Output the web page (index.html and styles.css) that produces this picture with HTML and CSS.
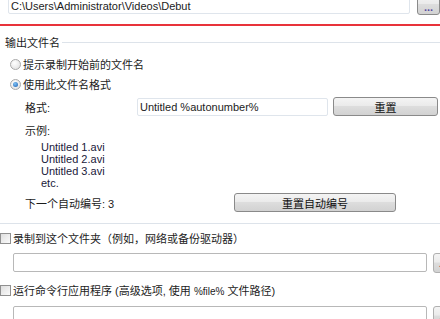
FILE: index.html
```html
<!DOCTYPE html>
<html lang="zh-CN">

<head>
  <meta charset="UTF-8">
  <title>输出设置</title>
  <link rel="stylesheet" href="styles.css">
</head>

<body>
  <div class="path-row">
    <div class="text-box path-box">C:\Users\Administrator\Videos\Debut</div>
    <div class="btn browse-btn">...</div>
  </div>
  <div class="red-line"></div>

  <div class="group">
    <div class="group-title">
      <span>输出文件名</span>
      <div class="group-line"></div>
    </div>

    <div class="radio-row first">
      <span class="radio"></span>
      <span>提示录制开始前的文件名</span>
    </div>
    <div class="radio-row">
      <span class="radio checked"></span>
      <span>使用此文件名格式</span>
    </div>

    <div class="format-row">
      <span class="label">格式:</span>
      <div class="text-box format-box">Untitled %autonumber%</div>
      <div class="btn reset-btn">重置</div>
    </div>

    <div class="example-label">示例:</div>
    <ul class="examples">
      <li>Untitled 1.avi</li>
      <li>Untitled 2.avi</li>
      <li>Untitled 3.avi</li>
      <li>etc.</li>
    </ul>

    <div class="next-row">
      <span class="next-label">下一个自动编号: 3</span>
      <div class="btn auto-btn">重置自动编号</div>
    </div>
  </div>
  <div class="group-bottom"></div>

  <div class="check-row">
    <span class="checkbox"></span>
    <span>录制到这个文件夹（例如，网络或备份驱动器）</span>
  </div>
  <div class="field-row">
    <div class="text-box wide-box"></div>
    <div class="btn side-btn">...</div>
  </div>

  <div class="check-row second">
    <span class="checkbox"></span>
    <span>运行命令行应用程序 (高级选项, 使用 <span class="small">%file%</span> 文件路径)</span>
  </div>
  <div class="field-row second">
    <div class="text-box wide-box"></div>
    <div class="btn side-btn">...</div>
  </div>
</body>

</html>
```

FILE: styles.css
```css
body {
  margin: 0;
  width: 440px;
  height: 319px;
  overflow: hidden;
  background-color: #ffffff;
  font-family: "Liberation Sans", "Noto Sans CJK SC", sans-serif;
  font-size: 11px;
  color: #1c1c1c;
}

.text-box {
  box-sizing: border-box;
  background-color: #fff;
  border: 1px solid #dfe5ec;
  border-radius: 2px;
  padding: 0 2px;
  display: flex;
  align-items: center;
  white-space: nowrap;
  flex-shrink: 0;
}

.btn {
  box-sizing: border-box;
  border: 1px solid #8a8a8a;
  border-radius: 3px;
  background: linear-gradient(#f4f4f4 0%, #ebebeb 45%, #dddddd 50%, #d2d2d2 100%);
  display: flex;
  align-items: center;
  justify-content: center;
  flex-shrink: 0;
  color: #111;
}

.path-row {
  display: flex;
  margin-top: -6px;
  padding-left: 8px;
  gap: 7px;
  height: 21px;
}

.path-box {
  width: 402px;
  height: 20px;
  padding-top: 3px;
}

.browse-btn {
  width: 23px;
  height: 21px;
  padding-top: 4px;
  color: #5a4ca0;
  font-weight: bold;
}

.red-line {
  margin-top: 9px;
  height: 2px;
  background-color: #e8323a;
}

.group-title {
  display: flex;
  align-items: center;
  margin-top: 9px;
  height: 14px;
  padding-left: 5px;
  gap: 2px;
}

.group-line {
  flex: 1;
  height: 1px;
  background-color: #dde3ea;
}

.radio-row,
.check-row {
  display: flex;
  align-items: center;
  gap: 2px;
  height: 20px;
}

.radio-row {
  padding-left: 10px;
}

.radio-row.first {
  margin-top: 5px;
}

.radio {
  box-sizing: border-box;
  width: 11px;
  height: 11px;
  border-radius: 50%;
  border: 1px solid #a9a9a9;
  background: radial-gradient(circle at 40% 35%, #ffffff, #dcdcdc);
  display: flex;
  align-items: center;
  justify-content: center;
}

.radio.checked::after {
  content: "";
  width: 5px;
  height: 5px;
  border-radius: 50%;
  background: radial-gradient(circle at 40% 35%, #7fc2f5, #1c5fb0);
}

.format-row {
  display: flex;
  align-items: center;
  margin-top: 2px;
  padding-left: 25px;
  height: 21px;
}

.label {
  width: 112px;
}

.format-box {
  width: 191px;
  height: 18px;
}

.reset-btn {
  margin-left: 5px;
  width: 105px;
  height: 19px;
}

.example-label {
  margin-top: 7px;
  padding-left: 25px;
  height: 14px;
  line-height: 14px;
}

.examples {
  list-style: none;
  margin: 3px 0 0;
  padding: 0 0 0 41px;
  color: #20203a;
}

.examples li {
  height: 12px;
  line-height: 12px;
}

.next-row {
  display: flex;
  align-items: center;
  margin-top: 4px;
  padding-left: 25px;
  height: 19px;
}

.next-label {
  width: 209px;
}

.auto-btn {
  width: 162px;
  height: 19px;
}

.group-bottom {
  margin-top: 11px;
  height: 1px;
  background-color: #dde3ea;
}

.check-row {
  margin-top: 4px;
}

.check-row.second {
  margin-top: 7px;
}

.checkbox {
  box-sizing: border-box;
  width: 11px;
  height: 11px;
  border: 1px solid #909090;
  background: linear-gradient(135deg, #dedede, #fbfbfb);
}

.small {
  font-size: 10px;
}

.field-row {
  display: flex;
  padding-left: 13px;
  gap: 6px;
  height: 20px;
  margin-top: 5px;
}

.field-row.second {
  margin-top: 6px;
}

.wide-box {
  width: 414px;
  height: 19px;
  border-color: #b8b8b8;
}

.side-btn {
  width: 20px;
  height: 20px;
  border-color: #b0b0b0;
  color: #c05050;
}
```
